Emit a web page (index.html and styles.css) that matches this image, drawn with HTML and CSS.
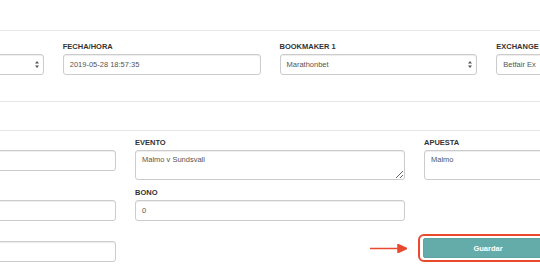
FILE: index.html
```html
<!DOCTYPE html>
<html>
<head>
	<title>Nueva apuesta</title>
	<meta content="width=device-width, initial-scale=1" name="viewport">
	<link rel="stylesheet" href="styles.css">
</head>
<body>
<form class="page">
	<hr class="rule">
	<div class="row row-4 top-row">
		<div class="group">
			<label>&nbsp;</label>
			<div class="select">
				<span></span>
				<svg class="caret" width="4" height="7" viewBox="0 0 4 7"><path d="M0 2.6 L2 0 L4 2.6 Z M0 4.4 L2 7 L4 4.4 Z"></path></svg>
			</div>
		</div>
		<div class="group">
			<label>FECHA/HORA</label>
			<input class="field" type="text" value="2019-05-28 18:57:35">
		</div>
		<div class="group">
			<label>BOOKMAKER 1</label>
			<div class="select">
				<span>Marathonbet</span>
				<svg class="caret" width="4" height="7" viewBox="0 0 4 7"><path d="M0 2.6 L2 0 L4 2.6 Z M0 4.4 L2 7 L4 4.4 Z"></path></svg>
			</div>
		</div>
		<div class="group">
			<label>EXCHANGE</label>
			<div class="select">
				<span>Betfair Ex</span>
				<svg class="caret" width="4" height="7" viewBox="0 0 4 7"><path d="M0 2.6 L2 0 L4 2.6 Z M0 4.4 L2 7 L4 4.4 Z"></path></svg>
			</div>
		</div>
	</div>
	<hr class="rule">
	<div class="blank"></div>
	<hr class="rule">
	<div class="bottom">
		<div class="row row-3">
			<div class="group">
				<label>&nbsp;</label>
				<input class="field" type="text">
			</div>
			<div class="group">
				<label>EVENTO</label>
				<textarea class="field area">Malmo v Sundsvall</textarea>
			</div>
			<div class="group">
				<label>APUESTA</label>
				<textarea class="field area">Malmo</textarea>
			</div>
		</div>
		<div class="row row-3">
			<div class="group">
				<label>&nbsp;</label>
				<input class="field" type="text">
			</div>
			<div class="group">
				<label>BONO</label>
				<input class="field" type="text" value="0">
			</div>
			<div></div>
		</div>
		<div class="row row-3">
			<div class="group">
				<label>&nbsp;</label>
				<input class="field" type="text">
			</div>
			<div></div>
			<div class="save-wrap">
				<svg class="arrow" width="37" height="9" viewBox="0 0 37 9">
					<line x1="0" y1="4.5" x2="30" y2="4.5"></line>
					<path d="M28 0.5 L37 4.5 L28 8.5 Z"></path>
				</svg>
				<button class="save" type="button">Guardar</button>
			</div>
		</div>
	</div>
</form>
</body>
</html>
```

FILE: styles.css
```css
body {
	margin: 0;
	background: #fff;
	overflow: hidden;
	font-family: "Liberation Sans", Arial, sans-serif;
	color: #333;
}

.page {
	width: 848px;
	margin-left: -154px;
	padding-top: 30px;
}

.rule {
	height: 0;
	margin: 0;
	border: 0;
	border-top: 1px solid #e6e6e6;
}

.blank {
	height: 28px;
}

.row {
	display: grid;
	column-gap: 19px;
	align-items: start;
}

.row-4 {
	grid-template-columns: repeat(4, 1fr);
}

.row-3 {
	grid-template-columns: repeat(3, 1fr);
}

.top-row {
	padding: 11px 0 26px;
}

.bottom {
	padding-top: 7px;
}

.group {
	margin-bottom: 8px;
}

.top-row .group {
	margin-bottom: 0;
}

label {
	display: block;
	font-size: 7.5px;
	line-height: 9px;
	font-weight: bold;
	margin-bottom: 3px;
}

.field,
.select {
	display: block;
	box-sizing: border-box;
	width: 100%;
	height: 21px;
	margin: 0;
	padding: 0 6px;
	border: 1px solid #ccc;
	border-radius: 3px;
	background: #fff;
	box-shadow: inset 0 1px 1px rgba(0, 0, 0, 0.075);
	font-family: "Liberation Sans", Arial, sans-serif;
	font-size: 7.5px;
	color: #555;
	outline: none;
}

.select {
	display: flex;
	align-items: center;
	justify-content: space-between;
	padding-right: 4px;
}

.caret {
	fill: #555;
}

.area {
	height: 30px;
	padding: 4px 6px;
	line-height: 10.7px;
	resize: vertical;
}

.save-wrap {
	position: relative;
	width: 130px;
	margin: 9px 0 0 -1px;
}

.save-wrap::before {
	content: "";
	position: absolute;
	top: -4px;
	right: -5px;
	bottom: -4px;
	left: -5px;
	border: 2px solid #e8492f;
	border-radius: 6px;
}

.arrow {
	position: absolute;
	left: -53px;
	top: 6px;
	fill: #e8492f;
	stroke: #e8492f;
	stroke-width: 1.5;
}

.save {
	display: block;
	width: 100%;
	height: 20px;
	border: 1px solid #5ea4a1;
	border-radius: 2px;
	background: #64aca9;
	color: #fff;
	font-family: "Liberation Sans", Arial, sans-serif;
	font-size: 7.5px;
	font-weight: bold;
}
```
